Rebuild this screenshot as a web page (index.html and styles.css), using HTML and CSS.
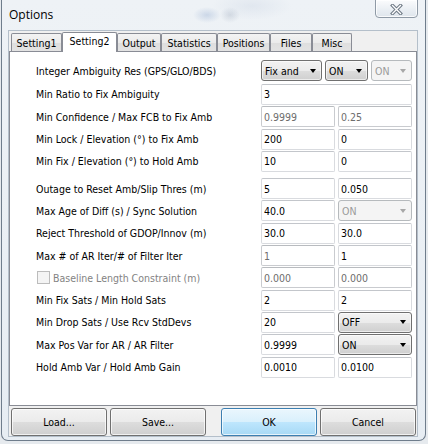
FILE: index.html
```html
<!DOCTYPE html>
<html>
<head>
<meta charset="utf-8">
<title>Options</title>
<link rel="stylesheet" href="styles.css">
</head>
<body>
<div class="window">
  <div class="titlebar">
    <span class="title">Options</span>
    <div class="close">
      <svg width="13" height="11" viewBox="0 0 13 11">
        <path d="M2.5 1.5 L10.5 9.5 M10.5 1.5 L2.5 9.5" stroke="#6f7a86" stroke-width="3.4" stroke-linecap="square" fill="none"/>
        <path d="M2.5 1.5 L10.5 9.5 M10.5 1.5 L2.5 9.5" stroke="#ffffff" stroke-width="1.3" stroke-linecap="square" fill="none"/>
      </svg>
    </div>
  </div>
  <div class="client">
    <div class="tabs">
      <div class="tab t1">Setting1</div>
      <div class="tab t2 active">Setting2</div>
      <div class="tab t3">Output</div>
      <div class="tab t4">Statistics</div>
      <div class="tab t5">Positions</div>
      <div class="tab t6">Files</div>
      <div class="tab t7">Misc</div>
    </div>
    <div class="panel">
      <div class="form">
        <div class="row first">
          <div class="label">Integer Ambiguity Res (GPS/GLO/BDS)</div>
          <div class="ctrls">
            <div class="combo c-fix"><span class="val">Fix and Hold</span><span class="arrow"></span></div>
            <div class="combo c-on"><span class="val">ON</span><span class="arrow"></span></div>
            <div class="combo c-on2 disabled"><span class="val">ON</span><span class="arrow"></span></div>
          </div>
        </div>
        <div class="row">
          <div class="label">Min Ratio to Fix Ambiguity</div>
          <div class="ctrls"><input class="edit full" type="text" value="3"></div>
        </div>
        <div class="row">
          <div class="label">Min Confidence / Max FCB to Fix Amb</div>
          <div class="ctrls"><input class="edit" type="text" value="0.9999" disabled><input class="edit" type="text" value="0.25" disabled></div>
        </div>
        <div class="row">
          <div class="label">Min Lock / Elevation (°) to Fix Amb</div>
          <div class="ctrls"><input class="edit" type="text" value="200"><input class="edit" type="text" value="0"></div>
        </div>
        <div class="row">
          <div class="label">Min Fix / Elevation (°) to Hold Amb</div>
          <div class="ctrls"><input class="edit" type="text" value="10"><input class="edit" type="text" value="0"></div>
        </div>
        <div class="row sep">
          <div class="label">Outage to Reset Amb/Slip Thres (m)</div>
          <div class="ctrls"><input class="edit" type="text" value="5"><input class="edit" type="text" value="0.050"></div>
        </div>
        <div class="row">
          <div class="label">Max Age of Diff (s) / Sync Solution</div>
          <div class="ctrls"><input class="edit" type="text" value="40.0"><div class="combo half disabled"><span class="val">ON</span><span class="arrow"></span></div></div>
        </div>
        <div class="row">
          <div class="label">Reject Threshold of GDOP/Innov (m)</div>
          <div class="ctrls"><input class="edit" type="text" value="30.0"><input class="edit" type="text" value="30.0"></div>
        </div>
        <div class="row">
          <div class="label">Max # of AR Iter/# of Filter Iter</div>
          <div class="ctrls"><input class="edit" type="text" value="1" disabled><input class="edit" type="text" value="1"></div>
        </div>
        <div class="row">
          <div class="label check-label"><span class="checkbox"></span>Baseline Length Constraint (m)</div>
          <div class="ctrls"><input class="edit" type="text" value="0.000" disabled><input class="edit" type="text" value="0.000" disabled></div>
        </div>
        <div class="row">
          <div class="label">Min Fix Sats / Min Hold Sats</div>
          <div class="ctrls"><input class="edit" type="text" value="2"><input class="edit" type="text" value="2"></div>
        </div>
        <div class="row">
          <div class="label">Min Drop Sats / Use Rcv StdDevs</div>
          <div class="ctrls"><input class="edit" type="text" value="20"><div class="combo half"><span class="val">OFF</span><span class="arrow"></span></div></div>
        </div>
        <div class="row">
          <div class="label">Max Pos Var for AR / AR Filter</div>
          <div class="ctrls"><input class="edit" type="text" value="0.9999"><div class="combo half"><span class="val">ON</span><span class="arrow"></span></div></div>
        </div>
        <div class="row">
          <div class="label">Hold Amb Var / Hold Amb Gain</div>
          <div class="ctrls"><input class="edit" type="text" value="0.0010"><input class="edit" type="text" value="0.0100"></div>
        </div>
      </div>
    </div>
    <div class="buttons">
      <div class="group">
        <button class="btn">Load...</button>
        <button class="btn">Save...</button>
      </div>
      <div class="group">
        <button class="btn default">OK</button>
        <button class="btn">Cancel</button>
      </div>
    </div>
  </div>
</div>
</body>
</html>
```

FILE: styles.css
```css
* { box-sizing: border-box; }
html, body { margin: 0; padding: 0; }
body {
  width: 428px;
  height: 444px;
  overflow: hidden;
  background: #e6eaee;
  font-family: "DejaVu Sans Condensed", "DejaVu Sans", sans-serif;
  font-stretch: condensed;
  font-size: 10.5px;
  color: #000;
}

.window {
  margin-left: 1px;
  width: 425px;
  height: 441px;
  border: 1px solid #6f7d8c;
  border-top: none;
  border-radius: 0 0 7px 7px;
  padding: 0 7px 3px 6px;
  display: flex;
  flex-direction: column;
  background:
    radial-gradient(ellipse 14px 8px at 205px 15px, rgba(80,120,180,0.22), rgba(80,120,180,0)),
    radial-gradient(ellipse 10px 8px at 228px 15px, rgba(90,110,140,0.18), rgba(90,110,140,0)),
    radial-gradient(ellipse 40px 14px at 250px 6px, rgba(150,170,200,0.15), rgba(150,170,200,0)),
    linear-gradient(#eef2f6, #e7edf3);
}

.titlebar {
  height: 30px;
  flex: none;
  display: flex;
  justify-content: space-between;
  align-items: flex-start;
}
.title {
  font-family: "Open Sans", "Noto Sans", sans-serif;
  font-stretch: normal;
  font-size: 12px;
  line-height: 16px;
  padding: 7px 0 0 1px;
  color: #000;
}
.close {
  width: 43px;
  height: 19px;
  margin-top: -1px;
  border: 1px solid #8f9aa6;
  border-radius: 0 0 4px 4px;
  background: linear-gradient(#fbfcfd, #e9eef3 60%, #dfe5ec);
  box-shadow: inset 0 0 0 1px rgba(255,255,255,0.8);
  display: flex;
  align-items: center;
  justify-content: center;
  padding-top: 1px;
}

.client {
  height: 407px;
  flex: none;
  background: #f0f0f0;
  border: 1px solid #b4bfca;
  padding-top: 1px;
  display: flex;
  flex-direction: column;
}

.tabs {
  height: 19px;
  flex: none;
  display: flex;
  align-items: flex-end;
  padding-left: 2px;
  position: relative;
  z-index: 1;
}
.tab {
  height: 18px;
  border: 1px solid #898c95;
  border-bottom: none;
  border-radius: 2px 2px 0 0;
  background: linear-gradient(#f3f3f3, #ebebeb 50%, #dedede 51%, #e3e3e3);
  display: flex;
  align-items: center;
  justify-content: center;
  padding-top: 1px;
  white-space: nowrap;
}
.tab.active {
  height: 20px;
  margin-bottom: -1px;
  background: #fff;
  padding-top: 0;
  padding-bottom: 4px;
}
.t1 { width: 51px; }
.t2 { width: 55px; }
.t3 { width: 44px; }
.t4 { width: 56px; }
.t5 { width: 53px; }
.t6 { width: 42px; }
.t7 { width: 40px; }

.panel {
  height: 355px;
  flex: none;
  background: #fff;
  border: 1px solid #898c95;
  padding: 8px 0 0 26px;
}

.form {
  display: flex;
  flex-direction: column;
  gap: 1.3px;
}
.row {
  height: 21px;
  display: flex;
  align-items: center;
}
.row.first { margin-bottom: 1.7px; }
.row.sep { margin-top: 5px; }
.label {
  width: 225px;
  flex: none;
  white-space: nowrap;
}
.check-label {
  display: flex;
  align-items: center;
  color: #838383;
  padding-left: 1px;
}
.checkbox {
  width: 13px;
  height: 13px;
  border: 1px solid #bcbcbc;
  background: #f4f4f4;
  margin-right: 3px;
}
.ctrls {
  width: 151px;
  height: 21px;
  flex: none;
  display: flex;
  gap: 3px;
}

.edit {
  width: 74px;
  height: 21px;
  margin: 0;
  padding: 0 2px;
  font: inherit;
  font-stretch: condensed;
  color: #000;
  background: #fff;
  border: 1px solid #d9dbdf;
  border-top-color: #c3c6cb;
  border-radius: 2px;
  outline: none;
}
.edit.full { width: 151px; }
.edit:disabled {
  color: #6d6d6d;
  background: #fff;
  border-color: #c9cbcf;
  border-top-color: #b8bbbf;
}

.combo {
  height: 21px;
  border: 1px solid #707070;
  border-radius: 3px;
  background: linear-gradient(#f2f2f2, #ebebeb 50%, #dddddd 51%, #cfcfcf);
  box-shadow: inset 0 0 0 1px rgba(255,255,255,0.6);
  display: flex;
  align-items: center;
  padding: 0 5px 0 3px;
}
.combo .val {
  flex: 1;
  overflow: hidden;
  white-space: nowrap;
}
.combo .arrow {
  width: 0;
  height: 0;
  border-left: 3.5px solid transparent;
  border-right: 3.5px solid transparent;
  border-top: 4px solid #000;
  flex: none;
}
.c-fix { width: 61px; }
.c-fix .val { flex: none; width: 35px; }
.c-fix .arrow { margin-left: auto; }
.c-on { width: 43px; }
.c-on2 { width: 41px; }
.combo.half { width: 74px; }
.combo.disabled {
  border-color: #b6babd;
  background: #f4f4f4;
  box-shadow: none;
  color: #9a9a9a;
}
.combo.disabled .arrow { border-top-color: #a7a7a7; }

.buttons {
  margin-top: 2px;
  height: 28px;
  flex: none;
  display: flex;
  justify-content: space-between;
  padding: 0 1px 0 2px;
}
.group {
  display: flex;
  gap: 3px;
}
.btn {
  width: 96px;
  height: 28px;
  margin: 0;
  padding: 0;
  font: inherit;
  font-stretch: condensed;
  color: #000;
  border: 1px solid #707070;
  border-radius: 3px;
  background: linear-gradient(#f2f2f2, #ebebeb 50%, #dddddd 51%, #cfcfcf);
  box-shadow: inset 0 0 0 1px rgba(255,255,255,0.7);
}
.btn.default {
  border-color: #3c7fb1;
  background: linear-gradient(#eaf6fd, #d9f0fc 50%, #bee6fd 51%, #a7d9f5);
}
```
